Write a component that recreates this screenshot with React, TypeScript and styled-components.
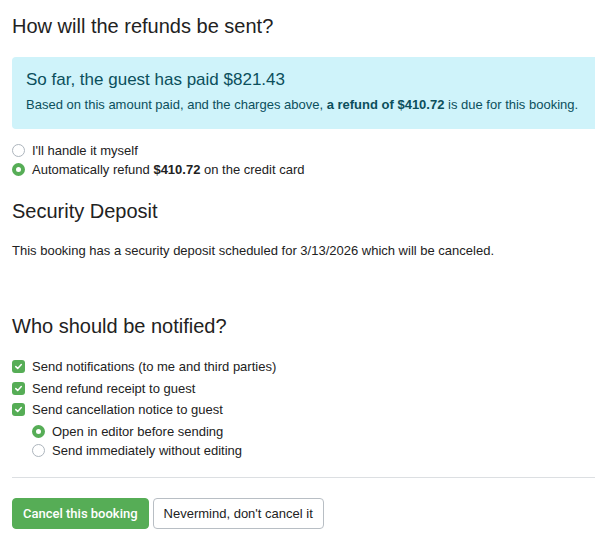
import React from "react";
import styled, { createGlobalStyle } from "styled-components";

const Global = createGlobalStyle`
  html, body { margin: 0; padding: 0; background: #fff; overflow: hidden; }
  body { font-family: "Liberation Sans", Arial, sans-serif; color: #222; }
  * { box-sizing: border-box; }
`;

const Page = styled.div`
  width: 640px;
  padding: 0 0 0 12px;
`;

const Heading = styled.h3<{ $top: number; $bottom: number }>`
  font-size: 20px;
  font-weight: 400;
  line-height: 22px;
  margin: ${(p) => p.$top}px 0 ${(p) => p.$bottom}px;
  color: #222;
`;

const Alert = styled.div`
  background: #cff3fa;
  color: #0b4f5c;
  border-radius: 4px;
  padding: 13px 16px 15px 14px;
  margin-bottom: 13px;
`;

const AlertTitle = styled.div`
  font-size: 17px;
  line-height: 20px;
  margin-bottom: 6px;
`;

const AlertText = styled.div`
  font-size: 13px;
  line-height: 18px;
`;

const OptionList = styled.div<{ $indent?: number; $gap: number }>`
  display: flex;
  flex-direction: column;
  gap: ${(p) => p.$gap}px;
  padding-left: ${(p) => p.$indent || 0}px;
`;

const Option = styled.label`
  display: flex;
  align-items: center;
  gap: 7px;
  font-size: 13px;
  line-height: 17px;
  color: #222;
`;

const Radio = styled.span<{ $on?: boolean }>`
  width: 13px;
  height: 13px;
  border-radius: 50%;
  flex: none;
  background: #fff;
  border: ${(p) => (p.$on ? "4px solid #56ad56" : "1px solid #adb5bd")};
`;

const Check = styled.span`
  width: 13px;
  height: 13px;
  border-radius: 3px;
  flex: none;
  background: #56ad56;
  display: flex;
  align-items: center;
  justify-content: center;
`;

const Para = styled.p`
  font-size: 13px;
  line-height: 18px;
  margin: 0;
`;

const Rule = styled.hr`
  border: 0;
  border-top: 1px solid #dcdfe2;
  margin: 18px 0 20px;
`;

const Buttons = styled.div`
  display: flex;
  gap: 4px;
`;

const Button = styled.button<{ $primary?: boolean }>`
  font-family: ${(p) => (p.$primary ? "Roboto, " : "")}"Liberation Sans", Arial, sans-serif;
  font-size: 13px;
  height: 31px;
  padding: 0 10px;
  border-radius: 4px;
  border: 1px solid ${(p) => (p.$primary ? "#56ad56" : "#b8bec4")};
  background: ${(p) => (p.$primary ? "#56ad56" : "#fff")};
  color: ${(p) => (p.$primary ? "#fff" : "#222")};
  font-weight: ${(p) => (p.$primary ? 500 : 400)};
`;

const Tick = () => (
  <svg width="9" height="9" viewBox="0 0 9 9">
    <path d="M1.8 4.6 L3.7 6.4 L7.3 2.6" fill="none" stroke="#fff" strokeWidth="1.5" strokeLinecap="round" strokeLinejoin="round" />
  </svg>
);

export default function App() {
  return (
    <Page>
      <Global />
      <Heading $top={15} $bottom={20}>How will the refunds be sent?</Heading>
      <Alert>
        <AlertTitle>So far, the guest has paid $821.43</AlertTitle>
        <AlertText>
          Based on this amount paid, and the charges above, <b>a refund of $410.72</b> is due for this booking.
        </AlertText>
      </Alert>
      <OptionList $gap={2}>
        <Option><Radio /><span>I'll handle it myself</span></Option>
        <Option><Radio $on /><span>Automatically refund <b>$410.72</b> on the credit card</span></Option>
      </OptionList>
      <Heading $top={22} $bottom={20}>Security Deposit</Heading>
      <Para>This booking has a security deposit scheduled for 3/13/2026 which will be canceled.</Para>
      <Heading $top={55} $bottom={21}>Who should be notified?</Heading>
      <OptionList $gap={4.5}>
        <Option><Check><Tick /></Check><span>Send notifications (to me and third parties)</span></Option>
        <Option><Check><Tick /></Check><span>Send refund receipt to guest</span></Option>
        <Option><Check><Tick /></Check><span>Send cancellation notice to guest</span></Option>
        <OptionList $gap={2} $indent={20}>
          <Option><Radio $on /><span>Open in editor before sending</span></Option>
          <Option><Radio /><span>Send immediately without editing</span></Option>
        </OptionList>
      </OptionList>
      <Rule />
      <Buttons>
        <Button $primary>Cancel this booking</Button>
        <Button>Nevermind, don't cancel it</Button>
      </Buttons>
    </Page>
  );
}
